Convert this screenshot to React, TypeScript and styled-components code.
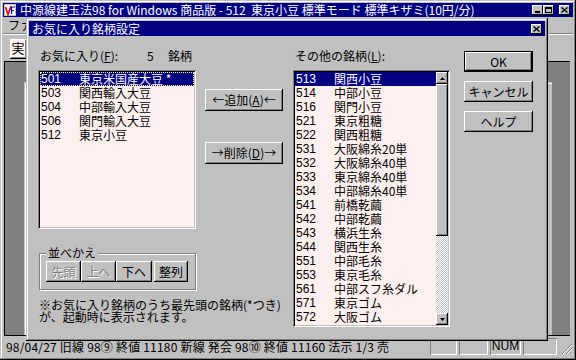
import React from "react";
import styled, { createGlobalStyle, css } from "styled-components";

const FONT = `"Noto Sans CJK JP", "Noto Sans", sans-serif`;

const Global = createGlobalStyle`
  html, body { margin: 0; padding: 0; background: #c0c0c0; }
  body { font-family: ${FONT}; font-size: 12px; color: #000; }
  * { box-sizing: border-box; }
  button { font: inherit; color: inherit; }
`;

const raised = css`
  box-shadow: inset -1px -1px #000, inset 1px 1px #fff, inset -2px -2px #808080;
`;
const windowFrame = css`
  box-shadow: inset -1px -1px #000, inset 1px 1px #c0c0c0, inset -2px -2px #808080, inset 2px 2px #fff;
`;
const sunkenField = css`
  box-shadow: inset 1px 1px #808080, inset -1px -1px #fff, inset 2px 2px #000, inset -2px -2px #c0c0c0;
`;

const Screen = styled.div`
  position: relative;
  width: 576px;
  height: 360px;
  overflow: hidden;
  background: #c0c0c0;
`;

const MainWindow = styled.div`
  display: flex;
  flex-direction: column;
  width: 576px;
  height: 360px;
  padding: 3px;
  background: #c0c0c0;
  ${windowFrame}
`;

const TitleBar = styled.div<{ $h: number }>`
  display: flex;
  align-items: center;
  flex: none;
  height: ${(p) => p.$h}px;
  background: #000080;
  color: #fff;
  padding: 0 3px 0 1px;
  white-space: nowrap;
`;

const TitleText = styled.span<{ $indent: number }>`
  flex: 1;
  margin-left: ${(p) => p.$indent}px;
  font-size: 12px;
  line-height: 14px;
`;

const CaptionButton = styled.button<{ $gap?: number }>`
  flex: none;
  width: 11px;
  height: 10px;
  padding: 0;
  border: 0;
  margin-left: ${(p) => p.$gap ?? 0}px;
  background: #c0c0c0;
  display: flex;
  align-items: center;
  justify-content: center;
  box-shadow: inset -1px -1px #000, inset 1px 1px #fff;
`;

const MenuBar = styled.div`
  flex: none;
  height: 16px;
  line-height: 16px;
  padding-left: 5px;
  display: flex;
  gap: 12px;
`;

const Separator = styled.div`
  flex: none;
  height: 2px;
  border-top: 1px solid #808080;
  border-bottom: 1px solid #fff;
`;

const Toolbar = styled.div`
  flex: none;
  height: 26px;
  padding: 4px 0 0 7px;
  display: flex;
`;

const ToolBox = styled.div`
  width: 17px;
  height: 20px;
  background: #fff0f0;
  box-shadow: inset 1px 1px #fff, inset -1px -1px #808080;
  border: 1px solid #000;
  border-width: 0 1px 1px 0;
  line-height: 18px;
  text-align: center;
  font-size: 13px;
`;

const MdiClient = styled.div`
  position: relative;
  flex: 1;
  margin: 0 3px 0 1px;
  background: #808080;
  border: 1px solid #000;
  border-right: 0;
  overflow: hidden;
`;

const ChildWindow = styled.div`
  position: absolute;
  left: 19px;
  top: 20px;
  right: 18px;
  bottom: 0;
  background: #c0c0c0;
  box-shadow: inset 1px 1px #c0c0c0, inset 2px 2px #fff;
`;

const StatusBar = styled.div`
  flex: none;
  height: 21px;
  display: flex;
  align-items: center;
`;

const StatusMain = styled.div`
  flex: 1;
  height: 17px;
  line-height: 17px;
  padding-left: 3px;
  letter-spacing: 0.2px;
  white-space: nowrap;
  overflow: hidden;
`;

const StatusPanel = styled.div<{ $w: number }>`
  flex: none;
  width: ${(p) => p.$w}px;
  height: 17px;
  margin-left: 2px;
  line-height: 17px;
  text-align: center;
  box-shadow: inset 1px 1px #808080, inset -1px -1px #fff;
  font-family: "Liberation Sans", sans-serif;
  font-size: 12px;
`;

const Grip = styled.div`
  flex: none;
  width: 14px;
  height: 17px;
  margin-left: 2px;
  display: flex;
  align-items: flex-end;
  justify-content: flex-end;
`;

/* ---------- dialog ---------- */

const Dialog = styled.div`
  position: absolute;
  left: 26px;
  top: 18px;
  width: 522px;
  height: 323px;
  padding: 3px;
  display: flex;
  flex-direction: column;
  background: #c0c0c0;
  ${windowFrame}
`;

const DialogBody = styled.div`
  flex: 1;
  display: flex;
  align-items: flex-start;
  padding-left: 9px;
`;

const Column = styled.div<{ $w: number; $ml?: number; $pt?: number }>`
  flex: none;
  width: ${(p) => p.$w}px;
  margin-left: ${(p) => p.$ml ?? 0}px;
  padding-top: ${(p) => p.$pt ?? 0}px;
  display: flex;
  flex-direction: column;
`;

const FieldLabel = styled.div`
  height: 12px;
  line-height: 12px;
  padding-left: 2px;
  display: flex;
  white-space: nowrap;
`;

const LabelPart = styled.span<{ $w?: number }>`
  flex: none;
  width: ${(p) => (p.$w ? `${p.$w}px` : "auto")};
`;

const ListBox = styled.div<{ $h: number }>`
  margin-top: 8px;
  height: ${(p) => p.$h}px;
  padding: 2px;
  background: #fff0f0;
  display: flex;
  ${sunkenField}
`;

const Rows = styled.div`
  flex: 1;
  min-width: 0;
  display: flex;
  flex-direction: column;
`;

const Row = styled.div<{ $selected?: boolean; $focus?: boolean }>`
  display: flex;
  height: 14px;
  line-height: 14px;
  padding-left: 1px;
  white-space: nowrap;
  background: ${(p) => (p.$selected ? "#000080" : "transparent")};
  color: ${(p) => (p.$selected ? "#fff" : "#000")};
  outline: ${(p) => (p.$focus ? "1px dotted #ffff80" : "none")};
  outline-offset: -1px;
`;

const Code = styled.span`
  flex: none;
  width: 38px;
  font-family: "Liberation Sans", sans-serif;
  font-size: 12px;
`;

const ScrollBar = styled.div`
  flex: none;
  width: 12px;
  display: flex;
  flex-direction: column;
`;

const ScrollArrow = styled.div`
  flex: none;
  height: 12px;
  background: #c0c0c0;
  display: flex;
  align-items: center;
  justify-content: center;
  ${raised}
`;

const ScrollThumb = styled.div<{ $h: number }>`
  flex: none;
  height: ${(p) => p.$h}px;
  background: #c0c0c0;
  ${raised}
`;

const ScrollTrack = styled.div`
  flex: 1;
  background-color: #fff;
  background-image: repeating-conic-gradient(#c0c0c0 0% 25%, #ffffff 0% 50%);
  background-size: 2px 2px;
`;

const PushButton = styled.button<{ $w: number; $h: number; $mt?: number; $default?: boolean; $off?: boolean }>`
  flex: none;
  width: ${(p) => p.$w}px;
  height: ${(p) => p.$h}px;
  margin-top: ${(p) => p.$mt ?? 0}px;
  padding: 0;
  border: 0;
  background: #c0c0c0;
  font-size: 12px;
  line-height: ${(p) => p.$h}px;
  white-space: nowrap;
  color: ${(p) => (p.$off ? "#808080" : "#000")};
  text-shadow: ${(p) => (p.$off ? "1px 1px 0 #fff" : "none")};
  ${(p) =>
    p.$default
      ? css`
          box-shadow: inset 0 0 0 1px #000, inset -2px -2px #000, inset 2px 2px #fff, inset -3px -3px #808080;
        `
      : raised}
`;

const GroupBox = styled.div`
  position: relative;
  margin: 24px 0 0 1px;
  width: 157px;
  height: 37px;
  border: 1px solid #808080;
  box-shadow: 1px 1px 0 #fff, inset 1px 1px 0 #fff;
  padding: 7px 0 0 6px;
  display: flex;
`;

const GroupLabel = styled.span`
  position: absolute;
  left: 6px;
  top: -7px;
  padding: 0 2px;
  line-height: 12px;
  background: #c0c0c0;
`;

const ButtonGap = styled.span`
  flex: none;
  width: 2px;
`;

const Note = styled.div`
  margin-top: 9px;
  padding-left: 1px;
  line-height: 12px;
  white-space: nowrap;
`;

const favorites = [
  ["501", "東京米国産大豆 *"],
  ["503", "関西輸入大豆"],
  ["504", "中部輸入大豆"],
  ["506", "関門輸入大豆"],
  ["512", "東京小豆"],
];

const others = [
  ["513", "関西小豆"],
  ["514", "中部小豆"],
  ["516", "関門小豆"],
  ["521", "東京粗糖"],
  ["522", "関西粗糖"],
  ["531", "大阪綿糸20単"],
  ["532", "大阪綿糸40単"],
  ["533", "東京綿糸40単"],
  ["534", "中部綿糸40単"],
  ["541", "前橋乾繭"],
  ["542", "中部乾繭"],
  ["543", "横浜生糸"],
  ["544", "関西生糸"],
  ["551", "中部毛糸"],
  ["553", "東京毛糸"],
  ["561", "中部スフ糸ダル"],
  ["571", "東京ゴム"],
  ["572", "大阪ゴム"],
];

const CloseGlyph = () => (
  <svg width="7" height="6" viewBox="0 0 7 6">
    <path d="M0.5 0.5 L6.5 5.5 M6.5 0.5 L0.5 5.5" stroke="#000" strokeWidth="1.3" />
  </svg>
);

const AppIcon = () => (
  <svg width="12" height="12" viewBox="0 0 12 12">
    <rect x="0.5" y="0.5" width="11" height="11" fill="#fff" stroke="#c0c0c0" />
    <path d="M1.5 3 L4 10.5 L7 2" stroke="#e00000" strokeWidth="1.6" fill="none" />
    <path d="M7.5 3 H11 M7.5 3 V10 M7.5 6.5 H10" stroke="#0000c0" strokeWidth="1.2" fill="none" />
  </svg>
);

const Arrow = ({ up }: { up?: boolean }) => (
  <svg width="5" height="3" viewBox="0 0 5 3">
    <path d={up ? "M2.5 0 L5 3 L0 3 Z" : "M0 0 L5 0 L2.5 3 Z"} fill="#000" />
  </svg>
);

export default function App() {
  return (
    <>
      <Global />
      <Screen>
        <MainWindow>
          <TitleBar $h={14}>
            <AppIcon />
            <TitleText $indent={4}>
              中源線建玉法98 for Windows 商品版 - 512&nbsp;&nbsp;東京小豆 標準モード 標準キザミ(10円/分)
            </TitleText>
            <CaptionButton>
              <svg width="5" height="2" viewBox="0 0 5 2" style={{ marginTop: 4 }}>
                <rect width="5" height="2" fill="#000" />
              </svg>
            </CaptionButton>
            <CaptionButton>
              <svg width="7" height="6" viewBox="0 0 7 6">
                <rect x="0.5" y="0.5" width="6" height="5" fill="none" stroke="#000" />
                <rect x="0" y="0" width="7" height="2" fill="#000" />
              </svg>
            </CaptionButton>
            <CaptionButton $gap={5}>
              <CloseGlyph />
            </CaptionButton>
          </TitleBar>
          <MenuBar>
            <span>ファイル(F)</span>
          </MenuBar>
          <Separator />
          <Toolbar>
            <ToolBox>実</ToolBox>
          </Toolbar>
          <MdiClient>
            <ChildWindow />
          </MdiClient>
          <StatusBar>
            <StatusMain>98/04/27 旧線 98⑨ 終値 11180 新線 発会 98⑩ 終値 11160 法示 1/3 売</StatusMain>
            <StatusPanel $w={27} />
            <StatusPanel $w={29} />
            <StatusPanel $w={31}>NUM</StatusPanel>
            <StatusPanel $w={34} />
            <Grip>
              <svg width="12" height="12" viewBox="0 0 12 12">
                <path d="M11 1 L1 11 M11 5 L5 11 M11 9 L9 11" stroke="#808080" strokeWidth="1" />
                <path d="M11 2 L2 11 M11 6 L6 11 M11 10 L10 11" stroke="#fff" strokeWidth="1" />
              </svg>
            </Grip>
          </StatusBar>
        </MainWindow>

        <Dialog>
          <TitleBar $h={15}>
            <TitleText $indent={2}>お気に入り銘柄設定</TitleText>
            <CaptionButton>
              <CloseGlyph />
            </CaptionButton>
          </TitleBar>
          <DialogBody>
            <Column $w={158} $pt={14}>
              <FieldLabel>
                <LabelPart $w={107}>
                  お気に入り(<u>F</u>):
                </LabelPart>
                <LabelPart $w={21}>5</LabelPart>
                <LabelPart>銘柄</LabelPart>
              </FieldLabel>
              <ListBox $h={159}>
                <Rows>
                  {favorites.map(([code, name], i) => (
                    <Row key={code} $selected={i === 0} $focus={i === 0}>
                      <Code>{code}</Code>
                      <span>{name}</span>
                    </Row>
                  ))}
                </Rows>
              </ListBox>
              <GroupBox>
                <GroupLabel>並べかえ</GroupLabel>
                <PushButton $w={35} $h={21} $off>
                  先頭
                </PushButton>
                <PushButton $w={35} $h={21} $off>
                  上へ
                </PushButton>
                <PushButton $w={36} $h={21}>
                  下へ
                </PushButton>
                <ButtonGap />
                <PushButton $w={34} $h={21}>
                  整列
                </PushButton>
              </GroupBox>
              <Note>
                ※お気に入り銘柄のうち最先頭の銘柄(*つき)
                <br />
                が、起動時に表示されます。
              </Note>
            </Column>

            <Column $w={78} $ml={9}>
              <PushButton $w={78} $h={22} $mt={53}>
                ←追加(<u>A</u>)←
              </PushButton>
              <PushButton $w={78} $h={22} $mt={31}>
                →削除(<u>D</u>)→
              </PushButton>
            </Column>

            <Column $w={157} $ml={10} $pt={14}>
              <FieldLabel>
                その他の銘柄(<u>L</u>):
              </FieldLabel>
              <ListBox $h={257}>
                <Rows>
                  {others.map(([code, name], i) => (
                    <Row key={code} $selected={i === 0}>
                      <Code>{code}</Code>
                      <span>{name}</span>
                    </Row>
                  ))}
                </Rows>
                <ScrollBar>
                  <ScrollArrow>
                    <Arrow up />
                  </ScrollArrow>
                  <ScrollThumb $h={152} />
                  <ScrollTrack />
                  <ScrollArrow>
                    <Arrow />
                  </ScrollArrow>
                </ScrollBar>
              </ListBox>
            </Column>

            <Column $w={69} $ml={14} $pt={15}>
              <PushButton $w={69} $h={21} $default>
                OK
              </PushButton>
              <PushButton $w={69} $h={21} $mt={9}>
                キャンセル
              </PushButton>
              <PushButton $w={69} $h={21} $mt={9}>
                ヘルプ
              </PushButton>
            </Column>
          </DialogBody>
        </Dialog>
      </Screen>
    </>
  );
}
